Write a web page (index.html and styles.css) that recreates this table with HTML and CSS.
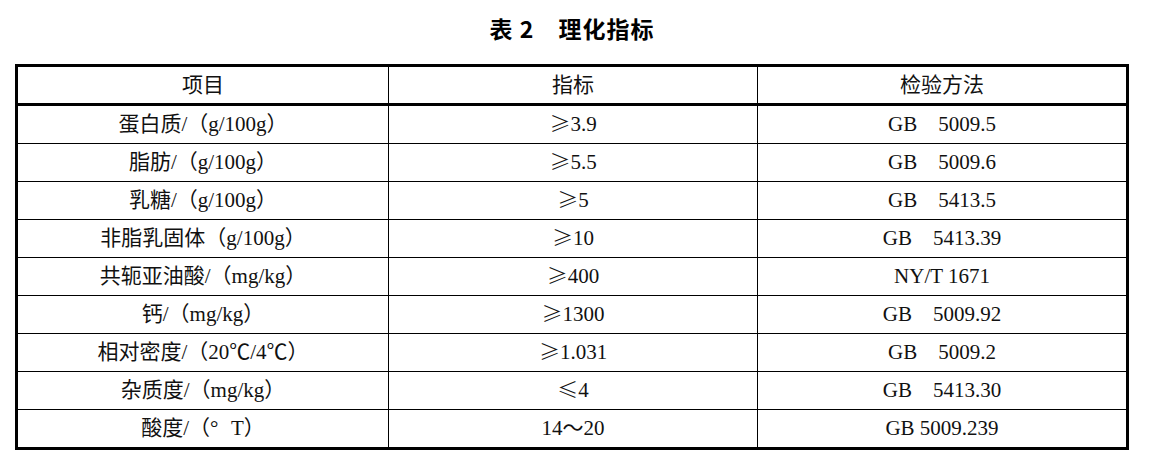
FILE: index.html
```html
<!DOCTYPE html>
<html lang="zh-CN">
<head>
<meta charset="utf-8">
<title>表 2 理化指标</title>
<link rel="stylesheet" href="styles.css">
</head>
<body>
<div class="page">
  <h1 class="caption">表 2<span class="gap"></span>理化指标</h1>
  <div class="frame">
    <table class="spec">
      <colgroup>
        <col class="c1"><col class="c2"><col class="c3">
      </colgroup>
      <thead>
        <tr><th>项目</th><th>指标</th><th>检验方法</th></tr>
      </thead>
      <tbody>
        <tr><td>蛋白质/（g/100g）</td><td><span class="sym">≥</span>3.9</td><td>GB    5009.5</td></tr>
        <tr><td>脂肪/（g/100g）</td><td><span class="sym">≥</span>5.5</td><td>GB    5009.6</td></tr>
        <tr><td>乳糖/（g/100g）</td><td><span class="sym">≥</span>5</td><td>GB    5413.5</td></tr>
        <tr><td>非脂乳固体（g/100g）</td><td><span class="sym">≥</span>10</td><td>GB    5413.39</td></tr>
        <tr><td>共轭亚油酸/（mg/kg）</td><td><span class="sym">≥</span>400</td><td>NY/T 1671</td></tr>
        <tr><td>钙/（mg/kg）</td><td><span class="sym">≥</span>1300</td><td>GB    5009.92</td></tr>
        <tr><td>相对密度/（20℃/4℃）</td><td><span class="sym">≥</span>1.031</td><td>GB    5009.2</td></tr>
        <tr><td>杂质度/（mg/kg）</td><td><span class="sym">≤</span>4</td><td>GB    5413.30</td></tr>
        <tr><td>酸度/（<span class="deg">°</span>T）</td><td>14～20</td><td>GB 5009.239</td></tr>
      </tbody>
    </table>
  </div>
</div>
</body>
</html>
```

FILE: styles.css
```css
html, body {
  margin: 0;
  padding: 0;
  background: #ffffff;
}

.page {
  width: 1114px;
  margin-left: 15px;
  padding-top: 13px;
}

.caption {
  margin: 0 0 21px 0;
  height: 30px;
  line-height: 30px;
  text-align: center;
  font-family: "Noto Sans CJK SC", "Noto Sans", sans-serif;
  font-weight: bold;
  font-size: 23px;
  letter-spacing: 1px;
  color: #000;
}

.caption .gap {
  display: inline-block;
  width: 24px;
}

.frame {
  border: 3px solid #000;
}

.spec {
  width: 1108px;
  table-layout: fixed;
  border-collapse: separate;
  border-spacing: 0;
  font-family: "Liberation Serif", "Noto Sans CJK SC", serif;
  font-size: 21px;
  color: #111;
}

.spec .c1 { width: 371px; }
.spec .c2 { width: 369px; }
.spec .c3 { width: 368px; }

.spec th,
.spec td {
  padding: 0;
  height: 37px;
  line-height: 37px;
  text-align: center;
  vertical-align: middle;
  font-weight: normal;
  white-space: pre;
  border-right: 1px solid #000;
  border-bottom: 1px solid #000;
}

.spec th {
  height: 36px;
  line-height: 36px;
  border-bottom: 3px solid #000;
}

.spec th:last-child,
.spec td:last-child {
  border-right: none;
}

.spec tbody tr:last-child td {
  border-bottom: none;
}

.spec .sym {
  font-family: "Noto Sans CJK SC", sans-serif;
  font-weight: 300;
  line-height: 1;
}

.spec .deg {
  display: inline-block;
  width: 1em;
  line-height: 1;
  text-align: left;
}
```
